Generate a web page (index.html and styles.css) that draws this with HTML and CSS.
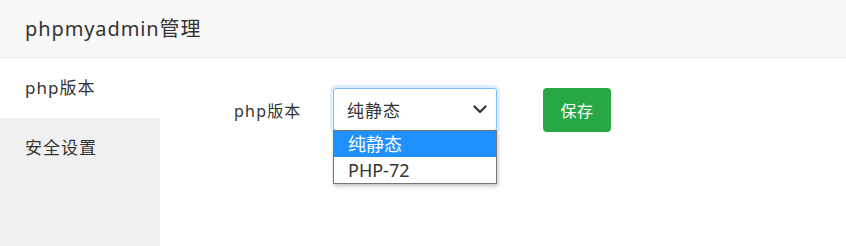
FILE: index.html
```html
<!DOCTYPE html>
<html lang="zh">
<head>
<meta charset="utf-8">
<title>phpmyadmin管理</title>
<link rel="stylesheet" href="styles.css">
</head>
<body>
<div class="page">
  <header class="header">phpmyadmin管理</header>
  <div class="body">
    <nav class="side">
      <div class="side-item active">php版本</div>
      <div class="side-item">安全设置</div>
    </nav>
    <main class="main">
      <div class="form-row">
        <label class="label">php版本</label>
        <div class="select-wrap">
          <div class="select">
            <span class="select-text">纯静态</span>
            <svg class="chev" width="14" height="9" viewBox="0 0 14 9"><path d="M1.5 1.5 L7 7 L12.5 1.5" fill="none" stroke="#333" stroke-width="2.2" stroke-linecap="round" stroke-linejoin="round"/></svg>
          </div>
          <ul class="options">
            <li class="opt sel">纯静态</li>
            <li class="opt">PHP-72</li>
          </ul>
        </div>
        <button class="btn">保存</button>
      </div>
    </main>
  </div>
</div>
</body>
</html>
```
FILE: styles.css
```css
html, body {
  margin: 0;
  padding: 0;
  background: #fff;
}
body {
  font-family: "Noto Sans", "Noto Sans CJK SC", sans-serif;
  color: #333;
}
.page {
  width: 846px;
  height: 246px;
  display: flex;
  flex-direction: column;
  overflow: hidden;
}
.header {
  flex: none;
  height: 58px;
  box-sizing: border-box;
  border-bottom: 1px solid #e8e8e8;
  background: #f8f8f8;
  font-size: 20px;
  letter-spacing: 0.9px;
  line-height: 57px;
  padding-left: 25px;
}
.body {
  flex: 1;
  display: flex;
}
.side {
  width: 160px;
  background: #f0f0f0;
  flex: none;
}
.side-item {
  height: 60px;
  line-height: 60px;
  padding-left: 25px;
  font-size: 17px;
  letter-spacing: 1px;
}
.side-item.active {
  background: #fff;
}
.main {
  flex: 1;
  padding: 30px 0 0 74px;
}
.form-row {
  display: flex;
  align-items: flex-start;
}
.label {
  font-size: 16px;
  letter-spacing: 1.2px;
  line-height: 46px;
  width: 99px;
}
.select-wrap {
  position: relative;
  width: 164px;
}
.select {
  box-sizing: border-box;
  height: 43px;
  border: 1px solid #80bdff;
  border-radius: 3px;
  box-shadow: 0 0 0 3px rgba(0, 123, 255, 0.12);
  display: flex;
  align-items: center;
  justify-content: space-between;
  padding: 0 9px 0 13px;
  font-size: 17px;
  letter-spacing: 1px;
  background: #fff;
}
.chev {
  display: block;
}
.options {
  position: absolute;
  left: 0;
  top: 42px;
  width: 164px;
  box-sizing: border-box;
  margin: 0;
  padding: 0;
  list-style: none;
  background: #fff;
  border: 1px solid #767676;
  box-shadow: 1px 2px 4px rgba(0, 0, 0, 0.25);
}
.opt {
  height: 26px;
  line-height: 26px;
  padding-left: 14px;
  font-size: 18px;
}
.opt.sel {
  background: #1e90ff;
  color: #fff;
}
.btn {
  margin-left: 46px;
  width: 68px;
  height: 44px;
  border: none;
  border-radius: 4px;
  background: #28a745;
  color: #fff;
  font-family: inherit;
  font-size: 16px;
  letter-spacing: 0.5px;
  padding: 0;
}
```
